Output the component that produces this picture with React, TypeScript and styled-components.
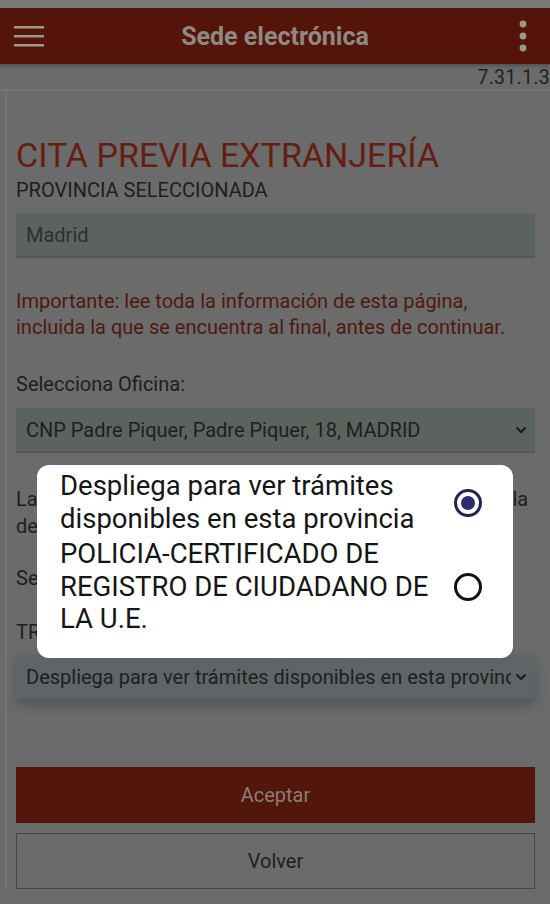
import React from "react";
import styled, { createGlobalStyle } from "styled-components";

const Global = createGlobalStyle`
  html, body { margin: 0; padding: 0; background: #6b6b6b; }
  body { font-family: Roboto, "Noto Sans", "Liberation Sans", sans-serif; width: 550px; height: 904px; overflow: hidden; }
  * { box-sizing: border-box; }
`;

const Page = styled.div`
  position: relative;
  width: 550px;
  height: 904px;
  overflow: hidden;
  background: #6b6b6b;
`;

const StatusStrip = styled.div`
  height: 8px;
  background: #797979;
`;

const Header = styled.header`
  height: 56px;
  background: #54140a;
  display: flex;
  align-items: center;
  justify-content: space-between;
  padding: 0 12px 0 14px;
  box-shadow: 0 2px 3px rgba(0, 0, 0, 0.25);
  position: relative;
`;

const Title = styled.h1`
  position: absolute;
  left: 0;
  right: 0;
  text-align: center;
  margin: 0;
  font-size: 25px;
  font-weight: 700;
  color: #8e8a7f;
  pointer-events: none;
`;

const IconBtn = styled.div`
  width: 30px;
  height: 30px;
  display: flex;
  align-items: center;
  justify-content: center;
`;

const Version = styled.div`
  height: 27px;
  display: flex;
  align-items: flex-end;
  justify-content: flex-end;
  font-size: 19.5px;
  line-height: 22px;
  color: #222;
  letter-spacing: 0.3px;
  border-bottom: 2px solid #747474;
`;

const Card = styled.main`
  margin-left: 5px;
  border-left: 2px solid #747474;
  padding: 45px 15px 0 9px;
`;

const Heading = styled.h2`
  margin: 0;
  font-size: 34px;
  line-height: 38px;
  font-weight: 400;
  color: #641e12;
`;

const Label = styled.div<{ $mt?: number }>`
  font-size: 20px;
  line-height: 24px;
  color: #1e1e1e;
  margin-top: ${(p) => p.$mt ?? 0}px;
  white-space: nowrap;
`;

const Field = styled.div<{ $raised?: boolean; $mt?: number }>`
  height: 45px;
  margin-top: ${(p) => p.$mt ?? 0}px;
  background: ${(p) => (p.$raised ? "#5f6567" : "#5c635f")};
  border-bottom: 2px solid ${(p) => (p.$raised ? "#585d60" : "#535755")};
  display: flex;
  align-items: center;
  justify-content: space-between;
  gap: 4px;
  padding: 0 8px 0 10px;
  font-size: 20px;
  white-space: nowrap;
  overflow: hidden;
  box-shadow: ${(p) => (p.$raised ? "0 6px 10px rgba(40, 50, 60, 0.35)" : "none")};
`;

const FieldText = styled.span<{ $muted?: boolean }>`
  color: ${(p) => (p.$muted ? "#2b312f" : "#1c201f")};
  overflow: hidden;
  text-overflow: clip;
`;

const Warning = styled.p`
  margin: 30px 0 0;
  font-size: 20px;
  line-height: 26px;
  color: #4e1912;
`;

const Hidden = styled.p`
  margin: 33px 0 0;
  font-size: 20px;
  line-height: 27px;
  color: #1e1e1e;
`;

const Buttons = styled.div`
  margin-top: 67px;
  display: flex;
  flex-direction: column;
  gap: 10px;
`;

const Button = styled.div<{ $primary?: boolean }>`
  height: 56px;
  display: flex;
  align-items: center;
  justify-content: center;
  font-size: 20px;
  background: ${(p) => (p.$primary ? "#52160a" : "transparent")};
  color: ${(p) => (p.$primary ? "#8c7e74" : "#1e1e1e")};
  border: 1.5px solid ${(p) => (p.$primary ? "#52160a" : "#4f4343")};
`;

const Dialog = styled.div`
  position: absolute;
  left: 37px;
  top: 465px;
  width: 476px;
  height: 193px;
  background: #ffffff;
  border-radius: 12px;
  padding: 5px 30px 0 23px;
  display: flex;
  flex-direction: column;
  gap: 3px;
`;

const Option = styled.div`
  display: flex;
  align-items: center;
  justify-content: space-between;
  gap: 12px;
`;

const OptionText = styled.span`
  font-size: 27.5px;
  line-height: 32.5px;
  color: #151515;
  flex: 1;
`;

const Radio = styled.span<{ $checked?: boolean }>`
  width: 28px;
  height: 28px;
  border-radius: 50%;
  border: 3px solid ${(p) => (p.$checked ? "#27234f" : "#121212")};
  display: flex;
  align-items: center;
  justify-content: center;
  flex-shrink: 0;
  margin-right: 1px;
  &::after {
    content: "";
    width: 14px;
    height: 14px;
    border-radius: 50%;
    background: ${(p) => (p.$checked ? "#2e2a6e" : "transparent")};
  }
`;

const Chevron = () => (
  <svg width="12" height="8" viewBox="0 0 12 8" style={{ flexShrink: 0 }}>
    <path d="M1.5 1.5 L6 6 L10.5 1.5" fill="none" stroke="#1a1a1a" strokeWidth="2" />
  </svg>
);

export default function App() {
  return (
    <Page>
      <Global />
      <StatusStrip />
      <Header>
        <IconBtn>
          <svg width="30" height="24" viewBox="0 0 30 24">
            <rect x="0" y="2" width="30" height="2.5" fill="#9e9888" />
            <rect x="0" y="11" width="30" height="2.5" fill="#9e9888" />
            <rect x="0" y="20" width="30" height="2.5" fill="#9e9888" />
          </svg>
        </IconBtn>
        <Title>Sede electrónica</Title>
        <IconBtn>
          <svg width="8" height="32" viewBox="0 0 8 32">
            <circle cx="4" cy="4" r="3.4" fill="#9e9888" />
            <circle cx="4" cy="16" r="3.4" fill="#9e9888" />
            <circle cx="4" cy="28" r="3.4" fill="#9e9888" />
          </svg>
        </IconBtn>
      </Header>
      <Version>7.31.1.3</Version>
      <Card>
        <Heading>CITA PREVIA EXTRANJERÍA</Heading>
        <Label $mt={4}>PROVINCIA SELECCIONADA</Label>
        <Field $mt={11}>
          <FieldText $muted>Madrid</FieldText>
        </Field>
        <Warning>
          Importante: lee toda la información de esta página, incluida la que se encuentra al final, antes de continuar.
        </Warning>
        <Label $mt={32}>Selecciona Oficina:</Label>
        <Field $mt={12}>
          <FieldText>CNP Padre Piquer, Padre Piquer, 18, MADRID</FieldText>
          <Chevron />
        </Field>
        <Hidden>
          La disponibilidad de trámites depende de la oficina y de la
          demanda existente en cada momento.
        </Hidden>
        <Label $mt={26}>Selecciona el trámite:</Label>
        <Label $mt={30}>TRÁMITES DISPONIBLES</Label>
        <Field $raised $mt={11}>
          <FieldText>Despliega para ver trámites disponibles en esta provincia</FieldText>
          <Chevron />
        </Field>
        <Buttons>
          <Button $primary>Aceptar</Button>
          <Button>Volver</Button>
        </Buttons>
      </Card>
      <Dialog role="dialog">
        <Option>
          <OptionText>Despliega para ver trámites disponibles en esta provincia</OptionText>
          <Radio $checked />
        </Option>
        <Option>
          <OptionText>POLICIA-CERTIFICADO DE REGISTRO DE CIUDADANO DE LA U.E.</OptionText>
          <Radio />
        </Option>
      </Dialog>
    </Page>
  );
}
